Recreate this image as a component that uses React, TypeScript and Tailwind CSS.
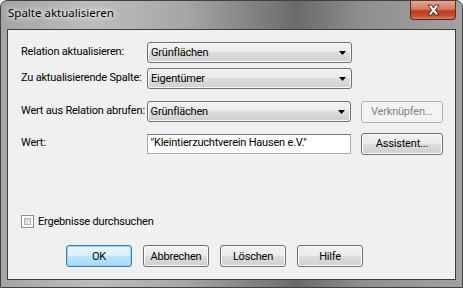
import React from "react";

const font = { fontFamily: 'Roboto, "Liberation Sans", Arial, sans-serif' };

function Combo({ text }: { text: string }) {
  return (
    <div className="relative w-[205px] h-[21px] rounded-[3px] border border-[#707070] bg-[linear-gradient(to_bottom,#f2f2f2_0%,#ebebeb_50%,#dddddd_50%,#cfcfcf_100%)] flex items-center pl-[3px] text-black shadow-[inset_0_0_0_1px_#f8f8f8]">
      <span className="leading-none">{text}</span>
      <svg className="absolute right-[5px] top-[8px]" width="7" height="4" viewBox="0 0 7 4">
        <path d="M0 0H7L3.5 4Z" fill="#000" />
      </svg>
    </div>
  );
}

function Btn({
  text,
  w = 66,
  disabled = false,
  def = false,
}: {
  text: string;
  w?: number;
  disabled?: boolean;
  def?: boolean;
}) {
  let cls =
    "h-[22px] rounded-[3px] border flex items-center justify-center leading-none ";
  if (disabled) cls += "border-[#adb2b5] bg-[#f4f4f4] text-[#838383]";
  else if (def)
    cls +=
      "border-[#3c7fb1] bg-[linear-gradient(to_bottom,#eaf6fd_0%,#d9f0fc_50%,#bee6fd_50%,#a7d9f5_100%)] text-black shadow-[inset_0_0_0_1px_#8fd2f3]";
  else
    cls +=
      "border-[#707070] bg-[linear-gradient(to_bottom,#f2f2f2_0%,#ebebeb_50%,#dddddd_50%,#cfcfcf_100%)] text-black shadow-[inset_0_0_0_1px_#fcfcfc]";
  return (
    <div className={cls} style={{ width: w }}>
      {text}
    </div>
  );
}

export default function App() {
  return (
    <div
      className="w-[463px] h-[288px] flex flex-col rounded-t-[7px] border border-[#404040] bg-[linear-gradient(to_right,#a4a4a4_0%,#bdbdbd_20%,#a6a6a6_40%,#7a7a7a_58%,#6a6a6a_64%,#8e8e8e_78%,#a2a2a2_100%)] overflow-hidden"
      style={font}
    >
      <div className="h-[28px] flex items-start justify-between">
        <div
          className="pl-[7px] pt-[6px] text-[11.5px] text-black leading-none [text-shadow:0_0_6px_#ffffff,0_0_4px_#ffffff]"
          style={{ fontFamily: '"Noto Sans", "Open Sans", sans-serif' }}
        >
          Spalte aktualisieren
        </div>
        <div className="mr-[6px] w-[46px] h-[19px] rounded-b-[4px] border border-t-0 border-[#5a2a22] bg-[linear-gradient(to_bottom,#e8a593_0%,#d47a64_45%,#c2391c_55%,#c74a2c_80%,#dc7e5e_100%)] flex items-center justify-center">
          <svg width="15" height="12" viewBox="0 0 15 12">
            <path
              d="M2 1H5.5L7.5 4L9.5 1H13L9.5 6L13 11H9.5L7.5 8L5.5 11H2L5.5 6Z"
              fill="#fff"
              stroke="#40302d"
              strokeWidth="1"
            />
          </svg>
        </div>
      </div>
      <div className="flex-1 mx-[6px] mb-[7px] border border-[#3c3c3c] bg-[#f0f0f0] flex flex-col pl-[13px] pr-[12px] pt-[12px] text-[11px] tracking-[-0.2px] text-black whitespace-nowrap">
        <div className="flex items-center h-[21px]">
          <div className="w-[126px]">Relation aktualisieren:</div>
          <Combo text="Grünflächen" />
        </div>
        <div className="flex items-center h-[21px] mt-[5px]">
          <div className="w-[126px]">Zu aktualisierende Spalte:</div>
          <Combo text="Eigentümer" />
        </div>
        <div className="flex items-center h-[21px] mt-[12px]">
          <div className="w-[126px]">Wert aus Relation abrufen:</div>
          <Combo text="Grünflächen" />
          <div className="ml-[10px]">
            <Btn text="Verknüpfen..." w={82} disabled />
          </div>
        </div>
        <div className="flex items-center h-[21px] mt-[11px]">
          <div className="w-[126px]">Wert:</div>
          <div className="w-[205px] h-[20px] border border-[#abadb3] border-t-[#6f7b8a] bg-white flex items-center pl-[3px]">
            &quot;Kleintierzuchtverein Hausen e.V.&quot;
          </div>
          <div className="ml-[10px]">
            <Btn text="Assistent..." w={82} />
          </div>
        </div>
        <div className="flex-1" />
        <div className="flex items-center gap-[4px]">
          <div className="w-[13px] h-[13px] border border-[#8e8f8f] bg-white p-[2px]">
            <div className="w-full h-full bg-[linear-gradient(135deg,#cbcfd5,#f6f6f6)] border border-[#aeb3b9]" />
          </div>
          <span>Ergebnisse durchsuchen</span>
        </div>
        <div className="flex gap-[11px] mt-[15px] mb-[12px] pl-[45px]">
          <Btn text="OK" def />
          <Btn text="Abbrechen" />
          <Btn text="Löschen" />
          <Btn text="Hilfe" />
        </div>
      </div>
    </div>
  );
}
